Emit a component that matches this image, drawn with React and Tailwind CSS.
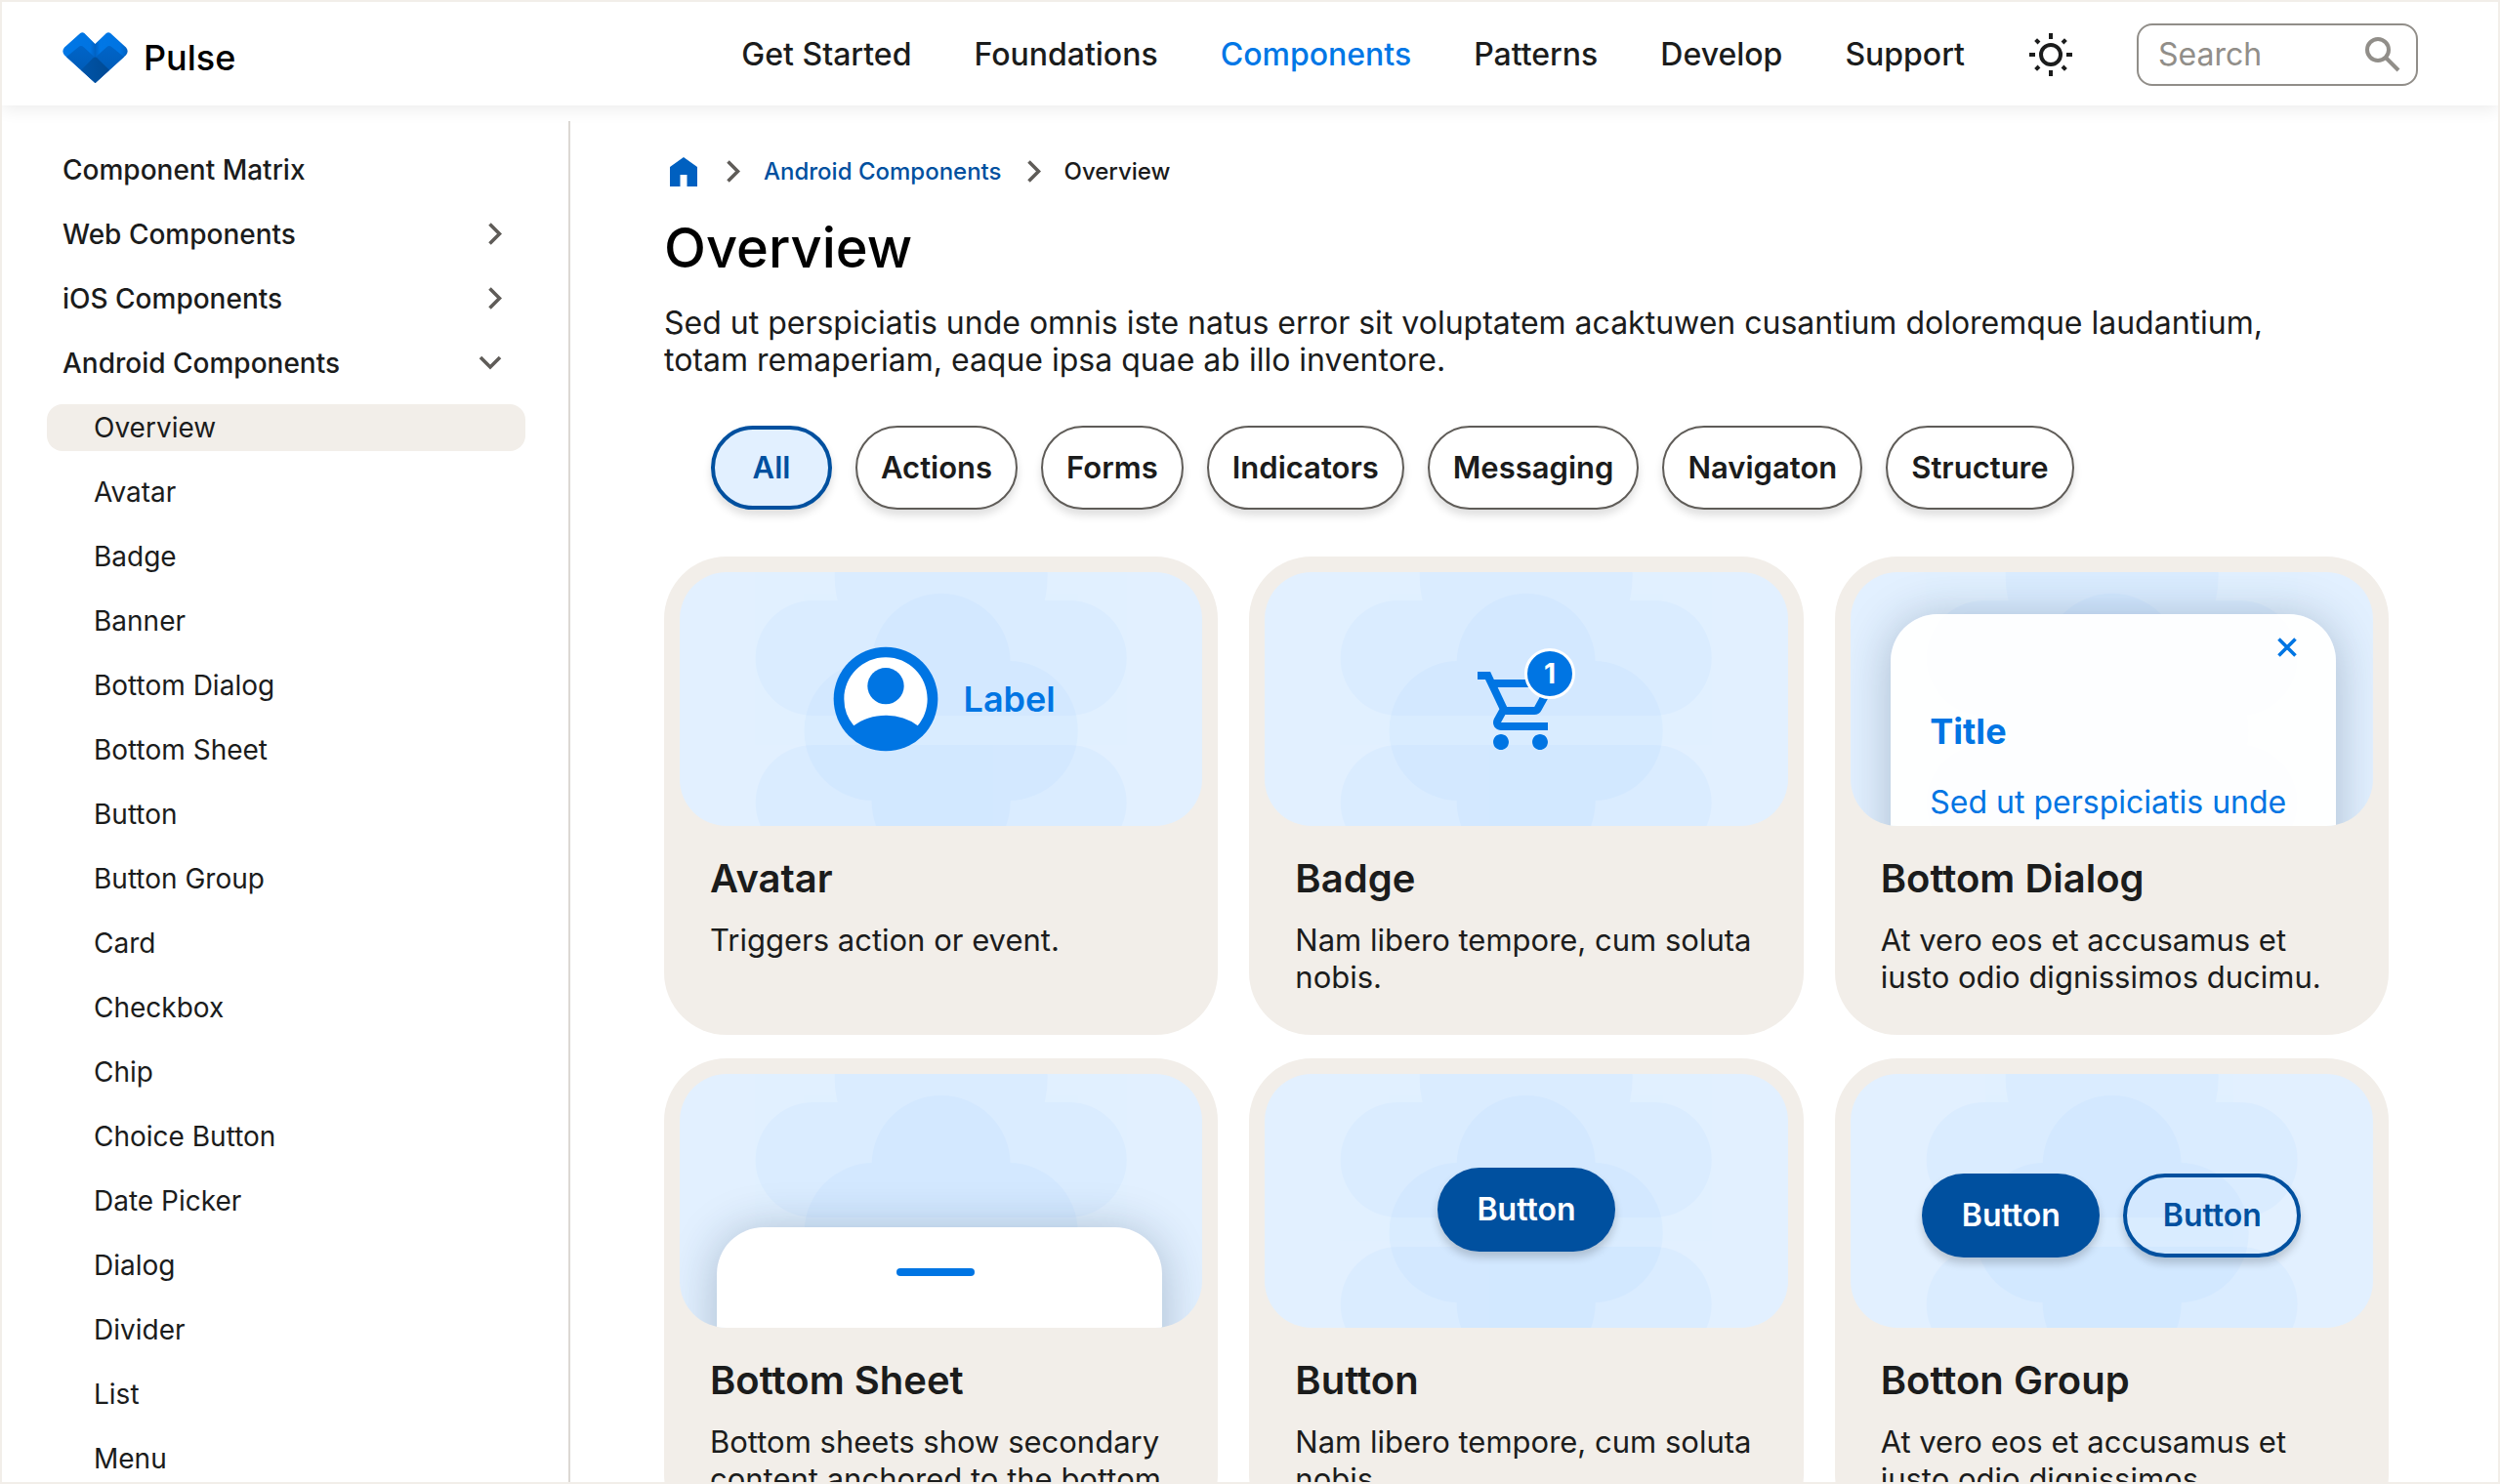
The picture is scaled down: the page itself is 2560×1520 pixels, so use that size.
import React, { useState } from 'react';

const navLinks = ['Get Started', 'Foundations', 'Components', 'Patterns', 'Develop', 'Support'];

const sections = [
    { label: 'Component Matrix' },
    { label: 'Web Components', arrow: 'right' },
    { label: 'iOS Components', arrow: 'right' },
    { label: 'Android Components', arrow: 'down' },
];

const androidPages = [
    'Overview',
    'Avatar',
    'Badge',
    'Banner',
    'Bottom Dialog',
    'Bottom Sheet',
    'Button',
    'Button Group',
    'Card',
    'Checkbox',
    'Chip',
    'Choice Button',
    'Date Picker',
    'Dialog',
    'Divider',
    'List',
    'Menu',
];

const filters = ['All', 'Actions', 'Forms', 'Indicators', 'Messaging', 'Navigaton', 'Structure'];

const Chevron = ({ direction = 'right' }) => (
    <svg viewBox="0 0 24 24" className="size-6 shrink-0" fill="none" stroke="#5f5c58" strokeWidth="3.6" aria-hidden="true">
        <path d={direction === 'down' ? 'M2 6 12 16 22 6' : 'M11.5 1.5 21.5 11.5 11.5 21.5'} />
    </svg>
);

const Logo = () => (
    <svg viewBox="0 0 67 52" className="h-[52px] w-[67px]" aria-hidden="true">
        <defs>
            <linearGradient id="logoTop" x1="0" y1="0" x2="1" y2="0">
                <stop offset="0" stopColor="#0077e6" />
                <stop offset=".42" stopColor="#0074e2" />
                <stop offset=".5" stopColor="#0062c4" />
                <stop offset=".58" stopColor="#0077e6" />
                <stop offset=".88" stopColor="#0074e2" />
                <stop offset="1" stopColor="#005fbe" />
            </linearGradient>
            <linearGradient id="logoMid" x1="0" y1="0" x2="0" y2="1">
                <stop offset="0" stopColor="#0064c8" />
                <stop offset="1" stopColor="#0058b0" />
            </linearGradient>
            <linearGradient id="logoLow" x1="0" y1="0" x2="1" y2="0">
                <stop offset="0" stopColor="#0054a8" />
                <stop offset="1" stopColor="#004a94" />
            </linearGradient>
        </defs>
        <path
            d="M18.2 1Q20.3-.6 22.4 1L33.4 12 44.9 1Q47-.6 49.1 1L65 15.600Q68.300 19.500 65 23.400L33.500 52 2 23.400Q-1.300 19.500 2 15.600Z"
            fill="url(#logoTop)"
        />
        <path
            d="M4 25.200 16.300 15.200Q19 13 21.700 15.200L33.400 26 45.200 15.200Q47.900 13 50.600 15.200L63 25.200 33.500 52Z"
            fill="url(#logoMid)"
        />
        <path d="M31.600 26.300Q33.400 24.600 35.200 26.300L48 38.800 33.500 52 19 38.800Z" fill="url(#logoLow)" />
    </svg>
);

const SunIcon = () => (
    <svg viewBox="0 0 48 48" className="size-12" fill="none" stroke="#1b1c1c" strokeWidth="4" aria-hidden="true">
        <circle cx="24" cy="24" r="10" />
        <path d="M24 2v6M24 40v6M2 24h6M40 24h6" />
        <path d="M8.600 8.600l3.400 3.400M36 36l3.400 3.400M8.600 39.400l3.400-3.400M36 12l3.400-3.400" />
    </svg>
);

const SearchIcon = () => (
    <svg viewBox="0 0 36 36" className="size-9 shrink-0" fill="none" stroke="#918e89" strokeWidth="4" aria-hidden="true">
        <circle cx="13" cy="13" r="11" />
        <path d="M20.500 20.500 34 34" />
    </svg>
);

// Soft blob pattern behind every preview
const PreviewPattern = () => (
    <svg
        viewBox="0 0 536 260"
        preserveAspectRatio="xMidYMin slice"
        className="absolute inset-0 h-full w-full"
        fill="#0080ff"
        aria-hidden="true"
    >
        <g opacity=".03">
            <circle cx="268" cy="4" r="109" />
            <rect x="78" y="29" width="380" height="118" rx="59" />
            <rect x="78" y="177" width="380" height="118" rx="59" />
        </g>
        <g opacity=".03">
            <circle cx="268" cy="93" r="71" />
            <rect x="128" y="91" width="280" height="143" rx="71" />
            <circle cx="268" cy="235" r="71" />
        </g>
    </svg>
);

const AvatarPreview = () => (
    <div className="relative flex h-full items-center justify-center gap-4 pr-1">
        <svg viewBox="0 0 24 24" className="size-32" fill="#0075e3" aria-hidden="true">
            <circle cx="12" cy="12" r="10" />
            <path
                fill="#fff"
                d="M18.140 17.120A9.950 9.950 0 0 0 12 15.150c-2.320 0-4.450.72-6.140 1.970A7.960 7.960 0 0 1 4 12c0-4.420 3.580-8 8-8s8 3.580 8 8c0 1.950-.7 3.730-1.860 5.120z"
            />
            <circle cx="12" cy="9.500" r="3.500" />
        </svg>
        <span className="text-4xl font-semibold text-[#0075e3]">Label</span>
    </div>
);

const BadgePreview = () => (
    <div className="relative flex h-full items-center justify-center pr-1">
        <div className="relative flex h-30 w-26 items-end">
            <svg viewBox="0 0 24 24" className="size-24" fill="#0075e3" aria-hidden="true">
                <path d="M15.550 13c.75 0 1.410-.41 1.750-1.030l3.580-6.490A.996.996 0 0 0 20.010 4H5.210l-.94-2H1v2h2l3.600 7.590-1.350 2.440C4.520 15.370 5.480 17 7 17h12v-2H7l1.100-2h7.450zM6.160 6h12.150l-2.760 5H8.530L6.160 6zM7 18c-1.100 0-1.990.9-1.990 2S5.900 22 7 22s2-.9 2-2-.9-2-2-2zm10 0c-1.100 0-1.990.9-1.990 2s.89 2 1.990 2 2-.9 2-2-.9-2-2-2z" />
            </svg>
            <span className="absolute top-2 right-0 flex size-13 items-center justify-center rounded-full border-3 border-white bg-[#0075e3] text-[28px] font-bold text-white">
                1
            </span>
        </div>
    </div>
);

const DialogPreview = () => (
    <div className="relative flex h-full justify-center pt-[43px] pl-1">
        <div className="h-80 w-[456px] shrink-0 rounded-t-[48px] bg-white/95 px-10 pt-6 text-[#0075e3] shadow-[0_4px_48px_rgba(20,50,80,0.28)]">
            <div className="flex justify-end">
                <svg viewBox="0 0 20 20" className="size-5" fill="none" stroke="#0075e3" strokeWidth="3.6" aria-hidden="true">
                    <path d="M1.500 1.500 18.500 18.500M18.500 1.500 1.500 18.500" />
                </svg>
            </div>
            <h3 className="mt-14 text-4xl font-bold">Title</h3>
            <p className="mt-[34px] text-[32px] leading-[38px] whitespace-nowrap">Sed ut perspiciatis unde</p>
        </div>
    </div>
);

const SheetPreview = () => (
    <div className="relative flex h-full justify-center pt-[157px] pr-1">
        <div className="h-80 w-[456px] shrink-0 rounded-t-[48px] bg-white pt-[42px] pr-2 shadow-[0_4px_48px_rgba(20,50,80,0.28)]">
            <div className="mx-auto h-2 w-20 rounded-full bg-[#0075e3]" />
        </div>
    </div>
);

const DemoButton = ({ outlined }) => (
    <button
        className={`h-[86px] w-[182px] rounded-full text-[32px] font-semibold shadow-[0_6px_8px_rgba(0,0,0,0.18)] ${
            outlined ? 'border-4 border-[#00509f] text-[#00509f]' : 'bg-[#00509f] text-white'
        }`}
    >
        Button
    </button>
);

const ButtonPreview = () => (
    <div className="relative flex h-full items-center justify-center pt-[18px]">
        <DemoButton />
    </div>
);

const ButtonGroupPreview = () => (
    <div className="relative flex h-full items-center justify-center gap-6 pt-[30px]">
        <DemoButton />
        <DemoButton outlined />
    </div>
);

const cards = [
    { title: 'Avatar', text: 'Triggers action or event.', Preview: AvatarPreview },
    { title: 'Badge', text: 'Nam libero tempore, cum soluta nobis.', Preview: BadgePreview },
    { title: 'Bottom Dialog', text: 'At vero eos et accusamus et iusto odio dignissimos ducimu.', Preview: DialogPreview },
    { title: 'Bottom Sheet', text: 'Bottom sheets show secondary content anchored to the bottom', Preview: SheetPreview },
    { title: 'Button', text: 'Nam libero tempore, cum soluta nobis.', Preview: ButtonPreview },
    { title: 'Botton Group', text: 'At vero eos et accusamus et iusto odio dignissimos.', Preview: ButtonGroupPreview },
];

const Header = () => (
    <header className="relative z-10 flex h-[106px] shrink-0 items-center justify-between bg-white pt-0.5 pr-[82px] pl-[62px] shadow-[0_4px_16px_rgba(0,0,0,0.08)]">
        <a href="#" className="flex items-center gap-4 pt-1.5 text-4xl font-medium text-black">
            <Logo />
            Pulse
        </a>
        <nav className="flex items-center gap-16 text-[32px] font-medium text-[#1b1c1c]">
            {navLinks.map((link) => (
                <a key={link} href="#" className={link === 'Components' ? 'text-[#0077e6]' : ''}>
                    {link}
                </a>
            ))}
            <button aria-label="Toggle theme">
                <SunIcon />
            </button>
            <label className="flex h-16 w-72 items-center rounded-2xl border-2 border-[#918e89] pr-4 pl-5">
                <input
                    type="search"
                    placeholder="Search"
                    aria-label="Search"
                    className="min-w-0 flex-1 font-normal outline-none placeholder:text-[#918e89]"
                />
                <SearchIcon />
            </label>
        </nav>
    </header>
);

const Sidebar = () => (
    <aside className="mt-4 w-[582px] shrink-0 overflow-hidden border-r-2 border-[#dcd8d4] pt-[26px] pr-11 pl-[46px] text-[28px] text-[#1b1c1c]">
        <ul className="flex flex-col gap-[18px]">
            {sections.map((section) => (
                <li key={section.label}>
                    <a href="#" className="flex h-12 items-center justify-between pr-6 pl-4 font-medium">
                        {section.label}
                        {section.arrow && <Chevron direction={section.arrow} />}
                    </a>
                </li>
            ))}
            {androidPages.map((page) => (
                <li key={page}>
                    <a
                        href="#"
                        className={`flex h-12 items-center rounded-2xl pl-12 ${page === 'Overview' ? 'bg-[#f2eee9]' : ''}`}
                    >
                        {page}
                    </a>
                </li>
            ))}
        </ul>
    </aside>
);

const Breadcrumb = () => (
    <nav aria-label="Breadcrumb" className="flex h-8 items-center pl-1.5 text-2xl font-medium">
        <a href="#" aria-label="Home">
            <svg viewBox="0 0 28 30" className="h-[30px] w-7" fill="#0060c0" aria-hidden="true">
                <path d="M14 0 28 10V30H17.500V18H10.500V30H0V10Z" />
            </svg>
        </a>
        <span className="ml-5 flex">
            <Chevron />
        </span>
        <a href="#" className="ml-6 text-[#00509f]">
            Android Components
        </a>
        <span className="ml-4 flex">
            <Chevron />
        </span>
        <span className="ml-6 text-[#1b1c1c]">Overview</span>
    </nav>
);

const ComponentCard = ({ title, text, Preview }) => (
    <article className="min-h-[490px] rounded-[64px] bg-[#f2eee9] px-4 pt-4 pb-10">
        <div className="relative h-[260px] overflow-hidden rounded-[48px] bg-[#e2f0ff]">
            <PreviewPattern />
            <Preview />
        </div>
        <div className="px-[31px] pt-[30px]">
            <h2 className="text-[40px] leading-[48px] font-semibold">{title}</h2>
            <p className="mt-5 text-[31px] leading-[38px]">{text}</p>
        </div>
    </article>
);

const App = () => {
    const [activeFilter, setActiveFilter] = useState('All');

    return (
        <div className="flex h-screen flex-col overflow-hidden border-2 border-[#f2eee9] bg-white font-['Inter',sans-serif] text-[#1b1c1c]">
            <Header />
            <div className="flex min-h-0 flex-1">
                <Sidebar />
                <main className="min-w-0 flex-1 overflow-y-auto pt-[52px] pr-28 pl-24 [scrollbar-width:none]">
                    <Breadcrumb />
                    <h1 className="mt-7 text-[56px] leading-[68px] font-medium text-black">Overview</h1>
                    <p className="mt-6 max-w-[1680px] text-[32px] leading-[38px]">
                        Sed ut perspiciatis unde omnis iste natus error sit voluptatem acaktuwen cusantium doloremque
                        laudantium, totam remaperiam, eaque ipsa quae ab illo inventore.
                    </p>
                    <div className="mt-12 flex flex-wrap gap-6 px-12">
                        {filters.map((filter) => (
                            <button
                                key={filter}
                                onClick={() => setActiveFilter(filter)}
                                className={`h-[86px] min-w-[124px] rounded-full px-6 text-[31px] font-semibold shadow-[0_6px_8px_rgba(0,0,0,0.13)] ${
                                    filter === activeFilter
                                        ? 'border-4 border-[#00509f] bg-[#e2f0ff] text-[#00509f]'
                                        : 'border-2 border-[#5f5c58] bg-white'
                                }`}
                            >
                                {filter}
                            </button>
                        ))}
                    </div>
                    <div className="mt-12 grid grid-cols-3 gap-x-8 gap-y-6">
                        {cards.map((card) => (
                            <ComponentCard key={card.title} {...card} />
                        ))}
                    </div>
                </main>
            </div>
        </div>
    );
};

export default App;
